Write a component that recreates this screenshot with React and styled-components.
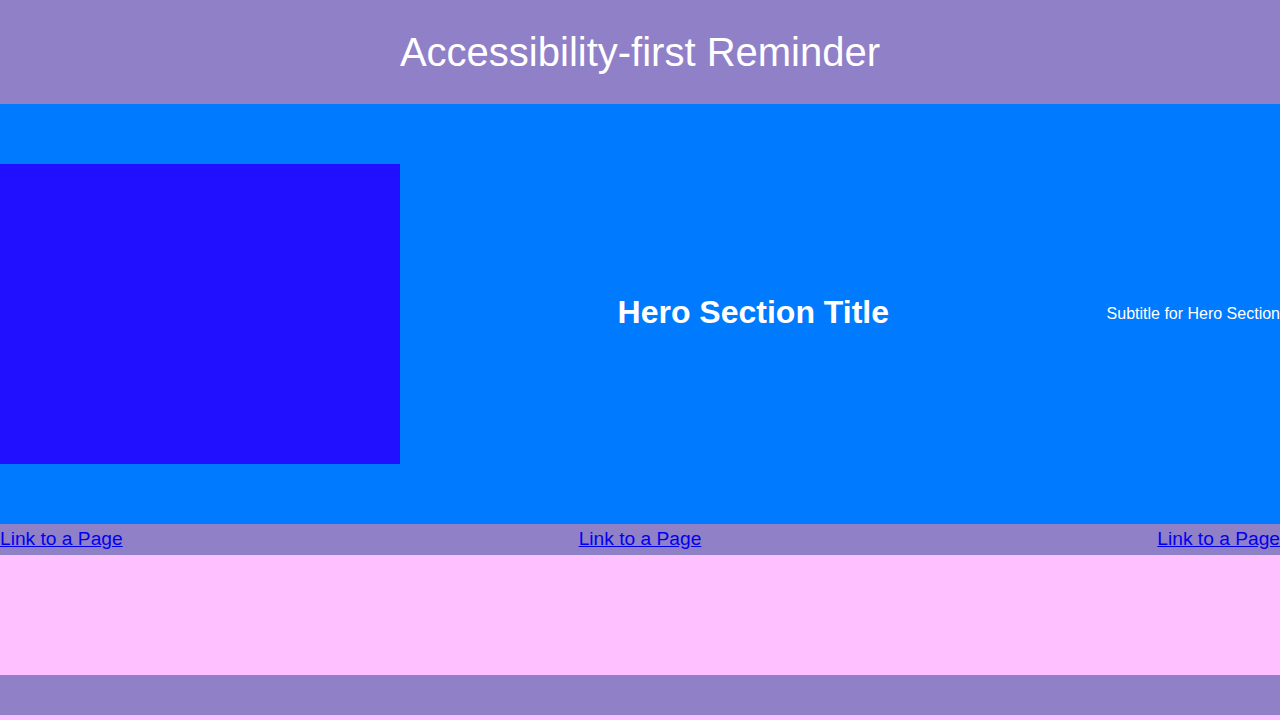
import React from "react";
import styled, { createGlobalStyle } from "styled-components";

const Global = createGlobalStyle`
  html, body { margin: 0; padding: 0; }
  body {
    background: #ffc0ff;
    font-family: "Liberation Sans", Arial, sans-serif;
  }
`;

const Header = styled.header`
  height: 104px;
  background: #9080c8;
  display: flex;
  align-items: center;
  justify-content: center;
`;

const Title = styled.h1`
  margin: 0;
  font-size: 40px;
  font-weight: 400;
  color: #ffffff;
`;

const Hero = styled.section`
  background: #007aff;
  padding: 60px 0;
  display: flex;
  align-items: center;
  justify-content: space-between;
  color: #ffffff;
`;

const HeroImage = styled.div`
  width: 400px;
  height: 300px;
  background: #2010ff;
`;

const HeroTitle = styled.h2`
  margin: 0 0 4px;
  font-size: 32px;
  font-weight: 700;
`;

const HeroSubtitle = styled.p`
  margin: 0;
  font-size: 16px;
`;

const Nav = styled.nav`
  height: 31px;
  box-sizing: border-box;
  padding-top: 4px;
  background: #9080c8;
  display: flex;
  align-items: flex-start;
  justify-content: space-between;
`;

const NavLink = styled.a`
  font-size: 19.2px;
  line-height: 22px;
  color: #0000ee;
  text-decoration: underline;
`;

const Main = styled.main`
  height: 120px;
`;

const Footer = styled.footer`
  height: 40px;
  background: #9080c8;
  margin-bottom: 5px;
`;

export default function App() {
  return (
    <>
      <Global />
      <Header>
        <Title>Accessibility-first Reminder</Title>
      </Header>
      <Hero>
        <HeroImage role="img" aria-label="Hero image" />
        <HeroTitle>Hero Section Title</HeroTitle>
        <HeroSubtitle>Subtitle for Hero Section</HeroSubtitle>
      </Hero>
      <Nav>
        <NavLink href="#">Link to a Page</NavLink>
        <NavLink href="#">Link to a Page</NavLink>
        <NavLink href="#">Link to a Page</NavLink>
      </Nav>
      <Main />
      <Footer />
    </>
  );
}
